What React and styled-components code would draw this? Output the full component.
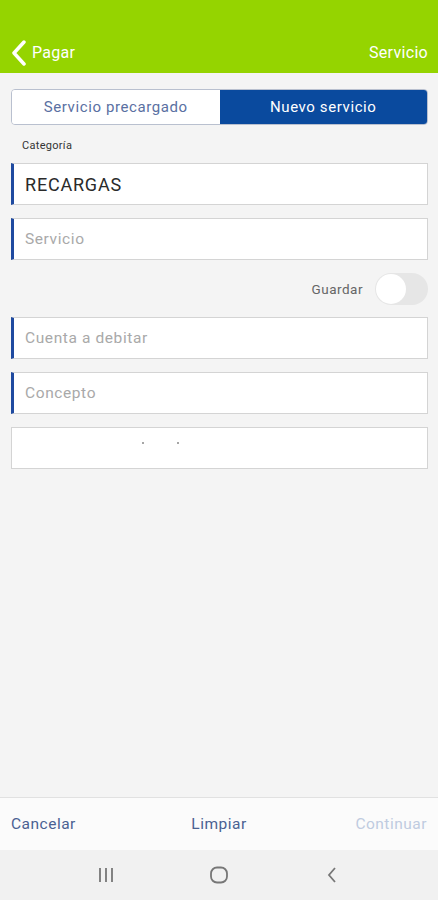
import styled, { createGlobalStyle } from 'styled-components';

const GlobalStyle = createGlobalStyle`
  html, body { margin: 0; padding: 0; }
  body {
    font-family: Roboto, "Liberation Sans", sans-serif;
    background: #f4f4f4;
  }
`;

const Screen = styled.div`
  display: flex;
  flex-direction: column;
  height: 900px;
  background: #f4f4f4;
`;

const Header = styled.header`
  height: 73px;
  box-sizing: border-box;
  background: #95d400;
  display: flex;
  align-items: center;
  justify-content: space-between;
  padding: 32px 10px 0 10px;
  color: #fff;
  font-size: 16px;
  letter-spacing: 0.3px;
`;

const Back = styled.div`
  display: flex;
  align-items: center;
  gap: 4px;
`;

const Main = styled.main`
  flex: 1;
  padding: 16px 10px 0 11px;
  display: flex;
  flex-direction: column;
`;

const Segmented = styled.div`
  display: grid;
  grid-template-columns: 1fr 1fr;
  height: 34px;
  border: 1px solid #b9c0cf;
  border-radius: 4px;
  overflow: hidden;
`;

const Segment = styled.div`
  display: flex;
  align-items: center;
  justify-content: center;
  font-size: 15px;
  letter-spacing: 0.6px;
  background: ${(p) => (p.$active ? '#0a4a9e' : '#fff')};
  color: ${(p) => (p.$active ? '#fff' : '#5a70a2')};
`;

const Label = styled.div`
  font-size: 11px;
  color: #333;
  letter-spacing: 0.3px;
  margin: 14px 0 11px 11px;
`;

const Field = styled.div`
  height: 42px;
  box-sizing: border-box;
  background: #fff;
  border: 1px solid #d4d4d4;
  border-left: ${(p) => (p.$marked ? '3px solid #1f4aa0' : '1px solid #d4d4d4')};
  display: flex;
  align-items: center;
  padding-left: 11px;
  font-size: ${(p) => (p.$value ? '18px' : '15.5px')};
  letter-spacing: ${(p) => (p.$value ? '0.8px' : '0.6px')};
  color: ${(p) => (p.$value ? '#2a2a2a' : '#a9a9a9')};
  margin-bottom: 13px;
  position: relative;
`;

const Dot = styled.span`
  position: absolute;
  top: 14px;
  width: 2px;
  height: 2px;
  border-radius: 50%;
  background: #888;
`;

const ToggleRow = styled.div`
  display: flex;
  justify-content: flex-end;
  align-items: center;
  gap: 12px;
  margin: 0 0 12px 0;
  font-size: 13.5px;
  letter-spacing: 0.5px;
  color: #666;
`;

const Toggle = styled.div`
  width: 53px;
  height: 32px;
  border-radius: 16px;
  background: #e6e6e6;
  display: flex;
  align-items: center;
`;

const Knob = styled.div`
  width: 30px;
  height: 30px;
  border-radius: 50%;
  background: #fff;
  margin-left: 1px;
`;

const Footer = styled.footer`
  height: 53px;
  box-sizing: border-box;
  border-top: 1px solid #e1e1e1;
  background: #fbfbfb;
  display: flex;
  align-items: center;
  justify-content: space-between;
  padding: 0 11px 0 11px;
  font-size: 15.5px;
  letter-spacing: 0.5px;
`;

const FooterButton = styled.span`
  color: ${(p) => (p.$disabled ? '#bfcbe0' : '#4a6192')};
  width: 90px;
  text-align: ${(p) => p.$align || 'left'};
`;

const NavBar = styled.nav`
  height: 50px;
  background: #f1f1f1;
  display: grid;
  grid-template-columns: repeat(3, 1fr);
  align-items: center;
  justify-items: center;
  padding: 0 50px;
`;

export default function App() {
  return (
    <>
      <GlobalStyle />
      <Screen>
        <Header>
          <Back>
            <svg width="18" height="26" viewBox="0 0 18 26">
              <path d="M14 2 L4 13 L14 24" fill="none" stroke="#fff" strokeWidth="3.5" strokeLinecap="round" strokeLinejoin="round" />
            </svg>
            <span>Pagar</span>
          </Back>
          <span>Servicio</span>
        </Header>
        <Main>
          <Segmented>
            <Segment>Servicio precargado</Segment>
            <Segment $active>Nuevo servicio</Segment>
          </Segmented>
          <Label>Categoría</Label>
          <Field $marked $value>RECARGAS</Field>
          <Field $marked>Servicio</Field>
          <ToggleRow>
            Guardar
            <Toggle>
              <Knob />
            </Toggle>
          </ToggleRow>
          <Field $marked>Cuenta a debitar</Field>
          <Field $marked>Concepto</Field>
          <Field>
            <Dot style={{ left: '130px' }} />
            <Dot style={{ left: '165px' }} />
          </Field>
        </Main>
        <Footer>
          <FooterButton>Cancelar</FooterButton>
          <FooterButton $align="center">Limpiar</FooterButton>
          <FooterButton $align="right" $disabled>Continuar</FooterButton>
        </Footer>
        <NavBar>
          <svg width="18" height="16" viewBox="0 0 18 16">
            <path d="M3 1v14M9 1v14M15 1v14" stroke="#777" strokeWidth="1.8" />
          </svg>
          <svg width="20" height="18" viewBox="0 0 20 18">
            <rect x="2" y="1.5" width="16" height="15" rx="6" fill="none" stroke="#777" strokeWidth="1.8" />
          </svg>
          <svg width="12" height="18" viewBox="0 0 12 18">
            <path d="M9 2 L3 9 L9 16" fill="none" stroke="#777" strokeWidth="1.8" />
          </svg>
        </NavBar>
      </Screen>
    </>
  );
}
